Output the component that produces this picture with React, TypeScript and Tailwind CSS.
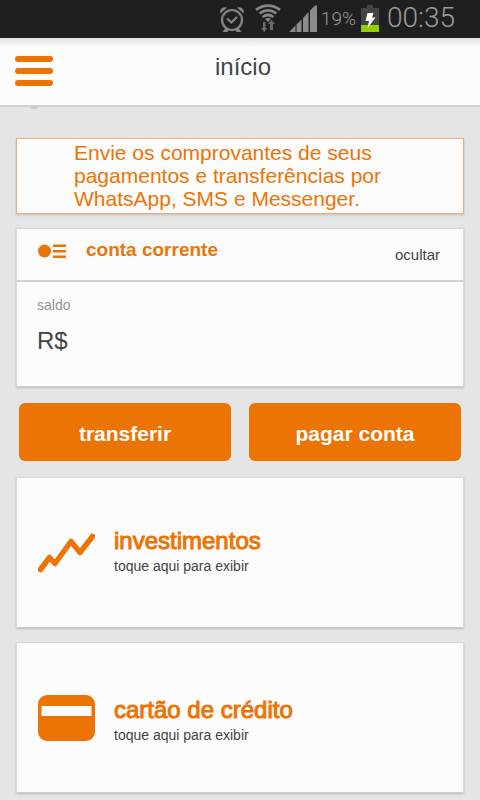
import type { ReactNode } from 'react';

function StatusBar() {
  return (
    <div className="flex h-[38px] items-center justify-end bg-[#1f1f1f] pr-[25px] pb-0.5 text-[#9b9b9b]">
      <svg className="mr-2.5 h-7 w-[26px]" viewBox="0 0 26 28" fill="none" stroke="#868686" aria-hidden="true">
        <circle cx="13" cy="16" r="10" strokeWidth="2.2" />
        <path d="M8 14.500l4.500 4 5.500-5.500" strokeWidth="2.200" />
        <path d="M1.500 9.500C0 5.500 3.500 2 8 3.500zM24.500 9.500C26 5.500 22.500 2 18 3.500z" fill="#868686" stroke="none" />
        <path d="M3.500 28l3-4 3 2.500-1 1.500zM22.500 28l-3-4-3 2.500 1 1.500z" fill="#868686" stroke="none" />
      </svg>
      <svg className="mr-2 h-7 w-[26px]" viewBox="0 0 26 28" fill="none" stroke="#868686" aria-hidden="true">
        <path d="M1 5.800Q13-2.500 25 5.800M4.500 9.500Q13 3.200 21.500 9.500M7.500 13Q13 9 18.500 13" strokeWidth="2.700" />
        <path d="M10 15Q13 12.800 16 15L13 18z" fill="#868686" stroke="none" />
        <path d="M8 18h2.500v6H12l-2.800 4L6 24h2zM15 26v-6h-2l3.500-4 3.500 4h-2v6z" fill="#6c6c6c" stroke="none" />
      </svg>
      <svg className="mr-1 h-7 w-7" viewBox="0 0 28 28" fill="#8b8b8b" aria-hidden="true">
        <path d="M0 28L6.500 21.500V28zM7.500 20.500L12.500 15.500V28h-5zM14 14l5.500-6V28H14zM21 6.500L25.500 2q2.500-2 2.500 1V28h-7z" />
      </svg>
      <span className="mr-[5px] pt-0.5 font-[Roboto,sans-serif] text-[19px] leading-7 font-light">19%</span>
      <svg className="mr-2 h-7 w-[18px]" viewBox="0 0 18 28" aria-hidden="true">
        <path d="M6 1h6v3h6v24H0V4h6z" fill="#444444" />
        <path d="M0 21h18v7H0z" fill="#93d000" />
        <path d="M6.500 9h6l-1.500 4.500h3.500L6.500 24l1.500-7H4.500z" fill="#ffffff" />
      </svg>
      <span className="font-[Roboto,sans-serif] text-[28px] leading-7 font-light">00:35</span>
    </div>
  );
}

function Card({ children, className = '' }: { children: ReactNode; className?: string }) {
  return (
    <section className={`border border-[#dadada] border-b-[#cccccc] bg-[#fcfcfc] shadow-[0_1px_2px_rgba(0,0,0,0.18)] ${className}`}>
      {children}
    </section>
  );
}

type ProductProps = {
  title: string;
  icon: ReactNode;
  textClass: string;
};

function ProductCard({ title, icon, textClass }: ProductProps) {
  return (
    <Card>
      <button type="button" className="flex h-[149px] w-full items-center gap-[19px] px-[21px] text-left">
        {icon}
        <span className={`flex flex-col ${textClass}`}>
          <span className="text-[24px] leading-7 text-[#ec7404] [-webkit-text-stroke:1px_#ec7404]">{title}</span>
          <span className="text-[14px] leading-[22px] text-[#444444]">toque aqui para exibir</span>
        </span>
      </button>
    </Card>
  );
}

function InvestmentsIcon() {
  return (
    <svg className="h-[46px] w-[57px] shrink-0" viewBox="0 0 57 46" fill="none" aria-hidden="true">
      <path
        d="M2.500 39.500L11.500 27.500L17 33.500L33 11.500L42 22.500L54.500 6.500"
        stroke="#ec7404"
        strokeWidth="5.500"
        strokeLinecap="round"
        strokeLinejoin="round"
      />
    </svg>
  );
}

function CreditCardIcon() {
  return (
    <svg className="h-[46px] w-[57px] shrink-0" viewBox="0 0 57 46" aria-hidden="true">
      <rect width="57" height="46" rx="9" fill="#ec7404" />
      <rect x="3.500" y="11" width="50" height="10" fill="#fcfcfc" />
    </svg>
  );
}

export default function App() {
  return (
    <div className="min-h-screen bg-[#e5e5e5] font-['Liberation_Sans',Arial,sans-serif] text-[#444444]">
      <StatusBar />

      <header className="grid h-[69px] grid-cols-[1fr_auto_1fr] items-start border-b-2 border-[#d0d0d0] bg-linear-to-b from-[#e4e4e4] to-[#fcfcfc] to-15% px-[15px]">
        <button type="button" aria-label="menu" className="mt-[18px] flex w-[38px] flex-col gap-1.5">
          <span className="h-1.5 w-full rounded-full bg-[#ec7404]" />
          <span className="h-1.5 w-full rounded-full bg-[#ec7404]" />
          <span className="h-1.5 w-full rounded-full bg-[#ec7404]" />
        </button>
        <h1 className="mt-[15px] pl-1.5 text-[24px] leading-7">início</h1>
      </header>

      <main className="px-4 pb-2">
        <div className="h-[31px] pl-3.5">
          <div className="h-0.5 w-2 rounded-b-full bg-[#cccccc]" />
        </div>

        <a
          href="#comprovantes"
          className="block border border-[#eab07c] bg-[#fcfcfc] pt-0.5 pr-14 pb-[3px] pl-[57px] text-[21px] leading-[23px] text-[#ec7404] shadow-[0_1px_2px_rgba(0,0,0,0.18)]"
        >
          Envie os comprovantes de seus
          <br />
          pagamentos e transferências por
          <br />
          WhatsApp, SMS e Messenger.
        </a>

        <Card className="mt-3.5">
          <div className="flex h-[53px] items-start border-b-2 border-[#d0d0d0] px-[21px]">
            <svg className="mt-3.5 mr-5 h-4 w-7" viewBox="0 0 28 16" fill="#ec7404" aria-hidden="true">
              <circle cx="6.500" cy="8" r="6.500" />
              <path d="M15 1.500h13v2.500H15zM15 7h13v2.500H15zM15 12.500h13V15H15z" />
            </svg>
            <h2 className="mt-2.5 flex-1 text-[19px] leading-[22px] font-bold text-[#ec7404]">conta corrente</h2>
            <button type="button" className="mt-4 mr-0.5 text-[15px] leading-5">
              ocultar
            </button>
          </div>
          <div className="px-5 pt-[13px] pb-[31px]">
            <p className="text-[14px] leading-5 text-[#949494]">saldo</p>
            <p className="mt-3 text-[24px] leading-7">R$</p>
          </div>
        </Card>

        <div className="my-4 grid grid-cols-2 gap-[18px] px-[3px]">
          <button type="button" className="h-[58px] rounded-md bg-[#ec7404] pt-1 text-[21px] font-bold text-white">
            transferir
          </button>
          <button type="button" className="h-[58px] rounded-md bg-[#ec7404] pt-1 text-[21px] font-bold text-white">
            pagar conta
          </button>
        </div>

        <div className="flex flex-col gap-3.5">
          <ProductCard title="investimentos" icon={<InvestmentsIcon />} textClass="pb-0.5" />
          <ProductCard title="cartão de crédito" icon={<CreditCardIcon />} textClass="pt-1.5" />
        </div>
      </main>
    </div>
  );
}
